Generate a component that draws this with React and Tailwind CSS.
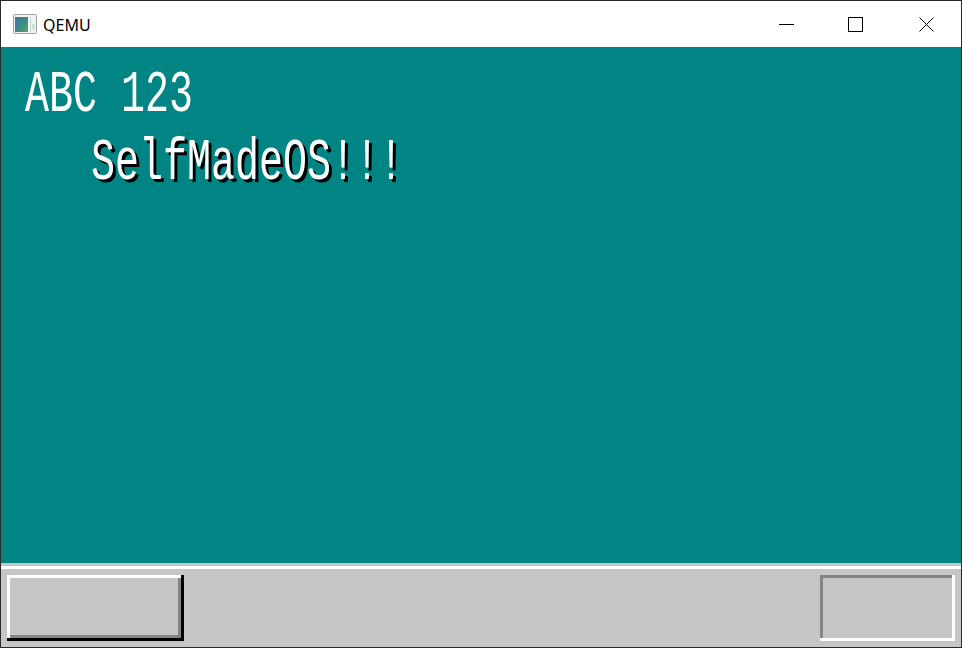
import React from 'react';

// QEMU window showing a tiny hobby OS (320x200 screen, scaled 3x)

function AppIcon() {
    return (
        <svg width="24" height="20" viewBox="0 0 24 20">
            <defs>
                <linearGradient id="qemuIconFill" x1="0" y1="0" x2="1" y2="1">
                    <stop offset="0" stopColor="#3f6f9e" />
                    <stop offset="0.6" stopColor="#3f8f86" />
                    <stop offset="1" stopColor="#5aa85f" />
                </linearGradient>
            </defs>
            <rect x="0.5" y="0.5" width="23" height="19" rx="1.5" fill="#f4f4f4" stroke="#a3a3a3" />
            <rect x="2" y="3" width="13" height="15" fill="url(#qemuIconFill)" />
            <rect x="17" y="3" width="1" height="15" fill="#cfcfcf" />
            <rect x="19" y="10" width="3" height="6" fill="#cfe3cf" />
        </svg>
    );
}

function TitleBar() {
    return (
        <div className="h-[46px] flex items-center bg-white shrink-0">
            <div className="pl-[12px] flex items-center">
                <AppIcon />
            </div>
            <span className="ml-[6px] mt-[1px] font-['Noto_Sans',sans-serif] text-[16px] text-black leading-none">QEMU</span>
            <div className="ml-auto flex h-full">
                {/* minimize */}
                <div className="w-[69px] h-full flex items-center justify-center pr-[4px]">
                    <svg width="15" height="15" viewBox="0 0 15 15">
                        <line x1="0" y1="7.5" x2="15" y2="7.5" stroke="#000" strokeWidth="1" />
                    </svg>
                </div>
                {/* maximize */}
                <div className="w-[69px] h-full flex items-center justify-center pr-[4px]">
                    <svg width="15" height="15" viewBox="0 0 15 15">
                        <rect x="0.5" y="0.5" width="14" height="14" fill="none" stroke="#000" strokeWidth="1" />
                    </svg>
                </div>
                {/* close */}
                <div className="w-[69px] h-full flex items-center justify-center">
                    <svg width="15" height="15" viewBox="0 0 15 15">
                        <path d="M0.5 0.5 L14.5 14.5 M14.5 0.5 L0.5 14.5" stroke="#000" strokeWidth="1" />
                    </svg>
                </div>
            </div>
        </div>
    );
}

function Desktop() {
    return (
        <div className="h-[516px] bg-[#008484] pl-[24px] pt-[19px] flex flex-col items-start">
            <div className="h-[48px] font-['Liberation_Mono',monospace] text-[40px] leading-none text-white whitespace-pre origin-top scale-y-[1.5]">
                ABC 123
            </div>
            <div className="mt-[20px] ml-[66px] h-[48px] font-['Liberation_Mono',monospace] text-[40px] leading-none text-white whitespace-pre origin-top scale-y-[1.5] [text-shadow:3px_2px_0_#000]">
                SelfMadeOS!!!
            </div>
        </div>
    );
}

function Taskbar() {
    return (
        <div className="h-[84px] flex flex-col bg-[#c6c6c6]">
            <div className="h-[3px] bg-[#c6c6c6]" />
            <div className="h-[3px] bg-white" />
            <div className="flex-1 p-[6px] flex justify-between">
                {/* raised start button */}
                <div className="w-[177px] h-[66px] bg-black pr-[3px] pb-[3px] flex">
                    <div className="flex-1 bg-white pl-[3px] pt-[3px] flex">
                        <div className="flex-1 bg-[#848484] pr-[3px] pb-[3px] flex">
                            <div className="flex-1 bg-[#c6c6c6]" />
                        </div>
                    </div>
                </div>
                {/* sunken tray */}
                <div className="w-[135px] h-[66px] bg-white pr-[3px] pb-[3px] flex">
                    <div className="flex-1 bg-[#848484] pl-[3px] pt-[3px] flex">
                        <div className="flex-1 bg-[#c6c6c6]" />
                    </div>
                </div>
            </div>
        </div>
    );
}

export default function App() {
    return (
        <div className="w-[962px] h-[648px] border border-[#2b2b2b] flex flex-col bg-white overflow-hidden">
            <TitleBar />
            <div className="h-[600px] flex flex-col">
                <Desktop />
                <Taskbar />
            </div>
        </div>
    );
}
